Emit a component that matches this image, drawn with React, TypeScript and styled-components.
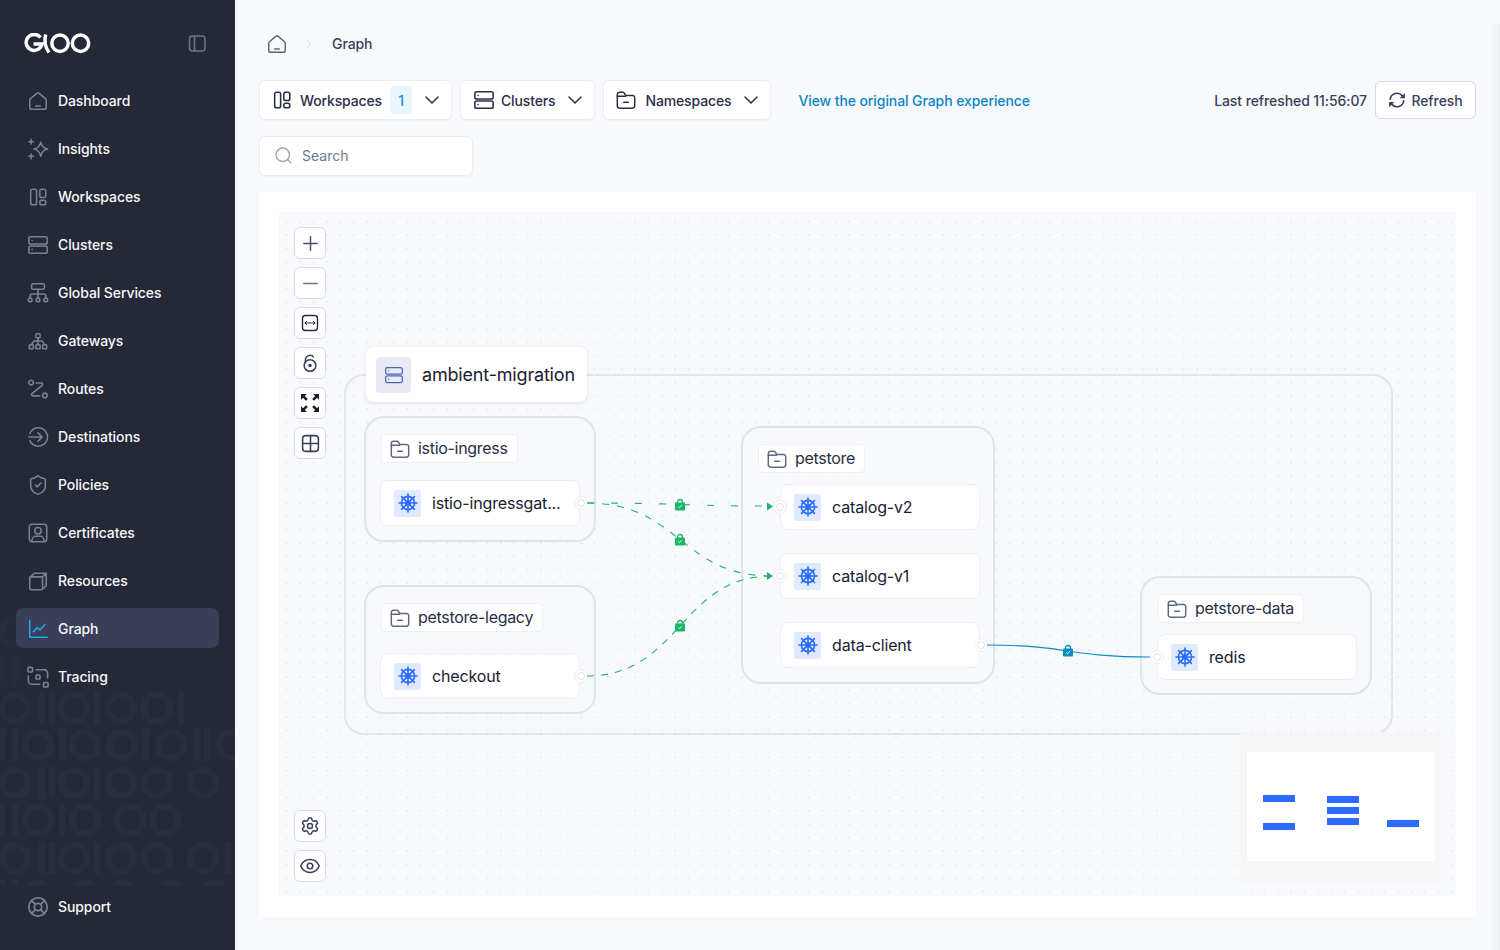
import React from "react";
import styled, { createGlobalStyle } from "styled-components";
import { ChevronDown, ChevronRight, Plus, Minus, Settings, Eye, LifeBuoy, ShieldCheck } from "lucide-react";

const Global = createGlobalStyle`
  * { box-sizing: border-box; }
  html, body { margin: 0; padding: 0; height: 950px; overflow: hidden; background: #f8f9fc; }
  body { font-family: Inter, "Noto Sans", "Liberation Sans", sans-serif; }
`;

const Page = styled.div`
  display: flex;
  width: 1500px;
  height: 950px;
  position: relative;
  overflow: hidden;
`;

const Sidebar = styled.aside`
  position: relative;
  flex: 0 0 235px;
  display: flex;
  flex-direction: column;
  padding: 0 16px 24px;
  background: #252836;
`;

const SidebarPattern = styled.svg`
  position: absolute;
  left: 0;
  top: 610px;
  width: 235px;
  height: 275px;
`;

const LogoRow = styled.div`
  position: relative;
  height: 80px;
  flex: none;
  display: flex;
  align-items: center;
  justify-content: space-between;
  padding: 6px 13px 0 8px;
  color: #6c7488;
`;

const Nav = styled.nav`
  position: relative;
  flex: 1;
  display: flex;
  flex-direction: column;
  gap: 8px;
`;

const NavItem = styled.div<{ $active?: boolean }>`
  position: relative;
  height: 40px;
  flex: none;
  display: flex;
  align-items: center;
  gap: 9px;
  padding: 1px 0 0 11px;
  border-radius: 7px;
  background: ${(p) => (p.$active ? "#3a3e59" : "transparent")};
  color: #f6f7f9;
  font-size: 14px;
  font-weight: 500;
  letter-spacing: -0.09px;
  line-height: 20px;
  svg { color: ${(p) => (p.$active ? "#1fa8e6" : "#7a8194")}; flex: none; }
`;

const Main = styled.main`
  flex: 1;
  min-width: 0;
  display: flex;
  flex-direction: column;
  padding: 24px 24px 0;
  background: #f8f9fc;
`;

const Breadcrumb = styled.div`
  height: 40px;
  margin-bottom: 16px;
  display: flex;
  align-items: center;
  padding-left: 7px;
  color: #5d657c;
  font-size: 14px;
  font-weight: 500;
  letter-spacing: -0.09px;
`;

const Crumb = styled.span`
  margin: 0 0 2px 16px;
  color: #3a3f58;
`;

const CrumbSep = styled.span`
  display: flex;
  margin-left: 14px;
  color: #cfd3dc;
`;

const Toolbar = styled.div`
  height: 40px;
  display: flex;
  align-items: center;
  gap: 8px;
`;

const Dropdown = styled.div<{ $left: number }>`
  height: 40px;
  display: flex;
  align-items: center;
  padding: 0 7px 0 ${(p) => p.$left}px;
  background: #fff;
  border: 1px solid #eceef3;
  border-radius: 6px;
  box-shadow: 0 1px 2px rgba(30, 35, 60, 0.04);
  color: #2a2e45;
  font-size: 14px;
  font-weight: 500;
  letter-spacing: -0.14px;
`;

const DropLabel = styled.span<{ $gap: number }>`
  margin-left: ${(p) => p.$gap}px;
  white-space: nowrap;
`;

const Badge = styled.span`
  width: 22px;
  height: 28px;
  margin-left: 8px;
  display: flex;
  align-items: center;
  justify-content: center;
  border-radius: 4px;
  background: #e8f5fc;
  color: #1a94d0;
`;

const DropChevron = styled.span`
  display: flex;
  margin-left: 8px;
  color: #2a2e45;
`;

const GraphLink = styled.a`
  margin-left: 19px;
  color: #0a86c4;
  font-size: 14px;
  font-weight: 500;
  letter-spacing: -0.09px;
  white-space: nowrap;
`;

const RefreshedText = styled.span`
  margin-left: auto;
  color: #3a3f58;
  font-size: 14px;
  font-weight: 500;
  letter-spacing: -0.09px;
  white-space: nowrap;
`;

const RefreshButton = styled.button`
  width: 101px;
  height: 38px;
  display: flex;
  align-items: center;
  justify-content: center;
  gap: 5px;
  padding: 0;
  background: #fff;
  border: 1px solid #d6d9e4;
  border-radius: 6px;
  color: #3a3f58;
  font: 500 14px Inter, sans-serif;
  letter-spacing: -0.09px;
`;

const SearchBox = styled.div`
  width: 214px;
  height: 40px;
  margin-top: 16px;
  display: flex;
  align-items: center;
  gap: 9px;
  padding: 0 0 1px 14px;
  background: #fff;
  border: 1px solid #eceef3;
  border-radius: 6px;
  box-shadow: 0 1px 2px rgba(30, 35, 60, 0.04);
  color: #6f7890;
  font-size: 14px;
  svg { color: #9aa5b8; }
`;

const Card = styled.section`
  height: 725px;
  margin-top: 16px;
  padding: 20px;
  background: #fff;
`;

const Canvas = styled.div`
  position: relative;
  height: 684px;
  background-color: #f8f9fc;
  background-image: radial-gradient(circle at center, #e9ebf1 1px, transparent 1.1px);
  background-size: 13.4px 13.4px;
  background-position: 1px 3px;
  overflow: hidden;
`;

const Controls = styled.div<{ $top: number }>`
  position: absolute;
  left: 15px;
  top: ${(p) => p.$top}px;
  display: flex;
  flex-direction: column;
  gap: 8px;
`;

const ControlButton = styled.button<{ $tone?: string }>`
  width: 32px;
  height: 32px;
  padding: 0;
  display: flex;
  align-items: center;
  justify-content: center;
  background: #fff;
  border: 1px solid #d8dbe5;
  border-radius: 6px;
  color: ${(p) => p.$tone || "#3a3f58"};
`;

const ClusterFrame = styled.div`
  position: absolute;
  left: 65px;
  top: 162px;
  width: 1049px;
  height: 361px;
  border: 2px solid #e4e6ed;
  border-radius: 20px;
`;

const ClusterLabel = styled.div`
  position: absolute;
  left: 87px;
  top: 135px;
  width: 221px;
  height: 55px;
  display: flex;
  align-items: center;
  gap: 11px;
  padding-left: 10px;
  background: #fff;
  border-radius: 8px;
  box-shadow: 0 1px 4px rgba(40, 45, 80, 0.12);
  color: #1c2033;
  font-size: 18px;
  letter-spacing: -0.18px;
  white-space: nowrap;
`;

const ClusterIconBox = styled.span`
  width: 35px;
  height: 36px;
  display: flex;
  align-items: center;
  justify-content: center;
  border-radius: 4px;
  background: #e8ebf6;
  color: #4f63b5;
`;

const Namespace = styled.div<{ $x: number; $y: number; $w: number; $h: number }>`
  position: absolute;
  left: ${(p) => p.$x - 1}px;
  top: ${(p) => p.$y - 1}px;
  width: ${(p) => p.$w + 1}px;
  height: ${(p) => p.$h + 1}px;
  display: flex;
  flex-direction: column;
  align-items: flex-start;
  padding: 16px 0 0 14px;
  background: rgba(248, 249, 252, 0.7);
  border: 2px solid #e2e4ec;
  border-radius: 20px;
`;

const NsLabel = styled.div<{ $indent: number }>`
  height: 29px;
  flex: none;
  margin-left: ${(p) => p.$indent}px;
  display: flex;
  align-items: center;
  gap: 7px;
  padding: 0 9px 1px 7px;
  background: #fff;
  border: 1px solid #eef0f4;
  border-radius: 4px;
  color: #2a2e45;
  font-size: 16px;
  letter-spacing: -0.3px;
  white-space: nowrap;
  svg { color: #5f6880; margin-top: 1px; }
`;

const ServiceNode = styled.div<{ $indent: number; $top: number }>`
  position: relative;
  width: 200px;
  height: 46px;
  flex: none;
  margin: ${(p) => p.$top}px 0 0 ${(p) => p.$indent}px;
  display: flex;
  align-items: center;
  gap: 11px;
  padding-left: 13px;
  background: #fff;
  border: 1px solid #eceef3;
  border-radius: 8px;
  color: #1c2033;
  font-size: 16px;
  letter-spacing: -0.15px;
  white-space: nowrap;
`;

const HelmBox = styled.span`
  width: 27px;
  height: 27px;
  flex: none;
  display: flex;
  align-items: center;
  justify-content: center;
  border-radius: 2px;
  background: #dfeafd;
  color: #2b6cff;
`;

const Handle = styled.span<{ $side: "left" | "right" }>`
  position: absolute;
  top: 50%;
  ${(p) => p.$side}: ${(p) => (p.$side === "right" ? -9 : -8)}px;
  width: 14px;
  height: 14px;
  margin-top: -7px;
  display: flex;
  align-items: center;
  justify-content: center;
  background: #fff;
  border: 1px solid #eceef2;
  border-radius: 50%;
  &::after {
    content: "";
    width: 6px;
    height: 6px;
    border: 1px solid #e2e4ea;
    border-radius: 50%;
  }
`;

const EdgeLayer = styled.svg`
  position: absolute;
  left: 0;
  top: 0;
  width: 1177px;
  height: 684px;
  pointer-events: none;
`;

const MiniMap = styled.div`
  position: absolute;
  left: 962px;
  top: 520px;
  width: 200px;
  height: 150px;
  padding: 20px 6px 20px;
  background: #f6f6f7;
`;

const MiniMapView = styled.div`
  position: relative;
  width: 188px;
  height: 109px;
  background: #fff;
`;

const MiniBar = styled.span<{ $x: number; $y: number }>`
  position: absolute;
  left: ${(p) => p.$x}px;
  top: ${(p) => p.$y}px;
  width: 32px;
  height: 7px;
  background: #2b6cff;
`;

const EdgeShade = styled.div`
  position: absolute;
  right: 0;
  top: 24px;
  bottom: 0;
  width: 10px;
  background: linear-gradient(to right, rgba(235, 236, 240, 0), #eeeff2);
  pointer-events: none;
`;

const Ic = ({ size = 22, sw = 1.7, children }: { size?: number; sw?: number; children: React.ReactNode }) => (
  <svg width={size} height={size} viewBox="0 0 24 24" fill="none" stroke="currentColor" strokeWidth={sw} strokeLinecap="round" strokeLinejoin="round">
    {children}
  </svg>
);

const HomeIcon = ({ size = 22, sw = 1.7 }: { size?: number; sw?: number }) => (
  <Ic size={size} sw={sw}>
    <path d="M3 11.2c0-.7.3-1.3.8-1.7l6.9-5.8a2 2 0 0 1 2.6 0l6.900 5.800c.5.4.8 1 .8 1.700V19a2 2 0 0 1-2 2H5a2 2 0 0 1-2-2z" />
    <path d="M9.500 17.500h5" />
  </Ic>
);
const InsightsIcon = () => (
  <Ic>
    <path d="M15 4.500c.8 4.300 2.600 6.500 7.500 7.500-4.900 1-6.700 3.200-7.500 8-.8-4.800-2.600-7-7.500-8 4.900-1 6.700-3.200 7.500-7.500z" />
    <path d="M4.500 1.500v5M2 4h5M4.500 17.500v5M2 20h5" />
  </Ic>
);
const WorkspacesIcon = ({ size = 22 }: { size?: number }) => (
  <Ic size={size}>
    <rect x="4" y="3.500" width="6.500" height="17" rx="2" />
    <rect x="14" y="3.500" width="6.500" height="9" rx="2" />
    <rect x="14" y="15.500" width="6.500" height="5" rx="2" />
  </Ic>
);
const ServerIcon = ({ size = 22, sw = 1.7 }: { size?: number; sw?: number }) => (
  <Ic size={size} sw={sw}>
    <rect x="2" y="3" width="20" height="8" rx="2" />
    <rect x="2" y="13" width="20" height="8" rx="2" />
    <path d="M5.500 7h.1M5.500 17h.1" />
  </Ic>
);
const GlobalIcon = () => (
  <Ic>
    <rect x="5" y="2" width="14" height="6" rx="1.500" />
    <path d="M12 8v9M3.500 17v-2a2 2 0 0 1 2-2h13a2 2 0 0 1 2 2v2" />
    <circle cx="3.500" cy="19.500" r="2" />
    <circle cx="12" cy="19.500" r="2" />
    <circle cx="20.500" cy="19.500" r="2" />
  </Ic>
);
const GatewayIcon = () => (
  <Ic>
    <rect x="9.700" y="4" width="4.600" height="4.500" rx=".8" />
    <rect x="2.500" y="16" width="4.500" height="4.500" rx=".8" />
    <rect x="9.700" y="16" width="4.600" height="4.500" rx=".8" />
    <rect x="17" y="16" width="4.500" height="4.500" rx=".8" />
    <path d="M12 8.500V16M4.800 16l2.700-4h9l2.700 4" />
  </Ic>
);
const RoutesIcon = () => (
  <Ic>
    <circle cx="4.500" cy="5" r="2.500" />
    <circle cx="19.500" cy="19" r="2.500" />
    <path d="M10 5.500h5.500c1.500 0 2 1.500 1 2.500L5.500 17c-1 1-.5 2.500 1 2.500H14" />
  </Ic>
);
const DestIcon = () => (
  <Ic>
    <path d="M3.200 8a10 10 0 1 1 0 8M2 12h14.500M12 7.500l4.500 4.500-4.500 4.500" />
  </Ic>
);
const CertIcon = () => (
  <Ic>
    <rect x="2.500" y="2.500" width="19" height="19" rx="3" />
    <circle cx="12" cy="9.500" r="3.500" />
    <path d="M5.500 21.500V20c0-2.500 2-4.500 4-4.500h5c2 0 4 2 4 4.500v1.500" />
  </Ic>
);
const CubeIcon = () => (
  <Ic>
    <rect x="3" y="7.500" width="14" height="14" rx="1.500" />
    <path d="M3.500 8 8 3.500h11.500A1.500 1.500 0 0 1 21 5v12l-4 4M17 7.500l4-4" />
  </Ic>
);
const GraphIcon = () => (
  <Ic>
    <path d="M3 2.500V21h19M7 15l4-4.500 3 2.500 5.500-6" />
  </Ic>
);
const TraceIcon = () => (
  <Ic>
    <rect x="1" y="1.500" width="5" height="5" rx="1" />
    <rect x="9.800" y="9.800" width="4.400" height="4.400" rx=".8" />
    <rect x="18" y="18" width="5" height="5" rx="1" />
    <path d="M10 4h8a4 4 0 0 1 4.500 4v5M14 20H5.500A4 4 0 0 1 1.500 16v-5" />
  </Ic>
);
const FolderIcon = ({ size = 22 }: { size?: number }) => (
  <Ic size={size} sw={1.6}>
    <path d="M2.500 18.500V6A2.500 2.500 0 0 1 5 3.500h3.500a2 2 0 0 1 1.700.9L11.500 7H19a2.500 2.500 0 0 1 2.500 2.500v9A2.500 2.500 0 0 1 19 21H5a2.500 2.500 0 0 1-2.500-2.500z" />
    <path d="M2.500 8h9M9.500 14.500h5" />
  </Ic>
);
const HelmIcon = () => (
  <svg width="20" height="20" viewBox="0 0 20 20" fill="none" stroke="currentColor" strokeWidth="1.600" strokeLinecap="round">
    <circle cx="10" cy="10" r="6.600" />
    <circle cx="10" cy="10" r="2.800" fill="currentColor" stroke="none" />
    <path d="M10 1v18M1 10h18M3.600 3.600l12.800 12.800M16.400 3.600 3.600 16.400" />
  </svg>
);
const RefreshGlyph = () => (
  <svg width="18" height="18" viewBox="0 0 24 24" fill="none" stroke="currentColor" strokeWidth="2.200" strokeLinecap="round">
    <path d="M3 11a9 9 0 0 1 16-4.500M21 13a9 9 0 0 1-16 4.500" />
    <path d="M22.500 2.500v7h-7zM1.500 21.500v-7h7z" fill="currentColor" stroke="none" />
  </svg>
);
const FitIcon = () => (
  <Ic size={20} sw={1.700}>
    <rect x="3" y="3" width="18" height="18" rx="3.500" />
    <path d="M6 12h12M8 10l-2 2 2 2M16 10l2 2-2 2" strokeWidth="1.200" />
  </Ic>
);
const LockOpenIcon = () => (
  <Ic size={20} sw={1.800}>
    <circle cx="12" cy="15" r="7" />
    <circle cx="12" cy="15" r="1.200" fill="currentColor" />
    <path d="M6.500 11V8a5.500 5.500 0 0 1 9.500-3.500" />
  </Ic>
);
const ExpandIcon = () => (
  <svg width="20" height="20" viewBox="0 0 20 20" fill="#1a1c28">
    {[0, 90, 180, 270].map((r) => (
      <path key={r} transform={`rotate(${r} 10 10)`} d="M1 1h5.800L4.800 3l3 3-1.800 1.800-3-3-2 2z" />
    ))}
  </svg>
);
const GridIcon = () => (
  <Ic size={21} sw={1.800}>
    <rect x="3" y="3" width="18" height="18" rx="3.500" />
    <path d="M12 3v18M3 12h18" />
  </Ic>
);
const SidebarToggle = () => (
  <svg width="18" height="18" viewBox="0 0 18 18" fill="none" stroke="currentColor" strokeWidth="1.600">
    <rect x="1.500" y="2" width="15.500" height="15" rx="3" />
    <path d="M6.500 2v15" />
  </svg>
);
const GlooLogo = () => (
  <svg width="67" height="21" viewBox="0 0 67 21" fill="none" stroke="#fff" strokeWidth="3.500" strokeLinecap="butt">
    <path d="M16.500 4.500A8 8 0 1 0 18 11H9.500" />
    <path d="M21.700 1.500C20 8 21 14 25 19.500" />
    <circle cx="36" cy="10.200" r="8.200" />
    <circle cx="56.500" cy="10.200" r="8.200" />
  </svg>
);

const LockBadge = ({ x, y, color }: { x: number; y: number; color: string }) => (
  <g transform={`translate(${x - 5} ${y - 6})`}>
    <path d="M2.500 4V3a2.500 2.500 0 0 1 5 0v1" fill="none" stroke={color} strokeWidth="1.300" />
    <rect x="0" y="3.500" width="10" height="8" rx=".8" fill={color} />
    <path d="M3.200 7.400 4.500 8.700 6.900 6.200" fill="none" stroke="#fff" strokeWidth=".9" />
  </g>
);

const patternRows: { y: number; o: number; items: (string | number)[] }[] = [
  { y: 22, o: 0.7, items: ["o", 15] },
  { y: 60, o: 0.55, items: ["i", 2, "i", 15] },
  { y: 98, o: 1, items: ["o", 15, "i", 42, "i", 52, "o", 74, "i", 97, "o", 121, "o", 157, "i", 181] },
  { y: 135, o: 1, items: ["i", 2, "i", 15, "o", 38, "i", 62, "o", 85, "o", 122, "i", 146, "o", 171, "i", 197, "i", 207, "o", 232] },
  { y: 173, o: 1, items: ["o", 15, "i", 42, "i", 52, "o", 74, "i", 97, "o", 121, "o", 157, "o", 203] },
  { y: 210, o: 1, items: ["i", 2, "i", 15, "o", 38, "i", 62, "o", 85, "o", 130, "o", 165] },
  { y: 248, o: 1, items: ["o", 15, "i", 42, "i", 52, "o", 74, "i", 97, "o", 121, "o", 157, "o", 203, "i", 228] },
  { y: 286, o: 1, items: ["i", 2, "i", 15, "o", 38, "o", 85, "o", 122, "o", 171, "o", 215] },
];

const PatternRow = ({ y, o, items }: { y: number; o: number; items: (string | number)[] }) => {
  const parts: React.ReactNode[] = [];
  for (let i = 0; i < items.length; i += 2) {
    const x = items[i + 1] as number;
    parts.push(
      items[i] === "o" ? (
        <circle key={i} cx={x} cy={y} r="13" fill="none" stroke="#2a2d3c" strokeWidth="6.500" />
      ) : (
        <rect key={i} x={x - 3} y={y - 16} width="6.500" height="32" fill="#2a2d3c" />
      )
    );
  }
  return <g opacity={o}>{parts}</g>;
};

const items: { label: string; icon: React.ReactNode; active?: boolean }[] = [
  { label: "Dashboard", icon: <HomeIcon /> },
  { label: "Insights", icon: <InsightsIcon /> },
  { label: "Workspaces", icon: <WorkspacesIcon /> },
  { label: "Clusters", icon: <ServerIcon /> },
  { label: "Global Services", icon: <GlobalIcon /> },
  { label: "Gateways", icon: <GatewayIcon /> },
  { label: "Routes", icon: <RoutesIcon /> },
  { label: "Destinations", icon: <DestIcon /> },
  { label: "Policies", icon: <ShieldCheck size={22} strokeWidth={1.7} /> },
  { label: "Certificates", icon: <CertIcon /> },
  { label: "Resources", icon: <CubeIcon /> },
  { label: "Graph", icon: <GraphIcon />, active: true },
  { label: "Tracing", icon: <TraceIcon /> },
];

const Service = ({ name, indent = 0, top, left, right }: { name: string; indent?: number; top: number; left?: boolean; right?: boolean }) => (
  <ServiceNode $indent={indent} $top={top}>
    <HelmBox><HelmIcon /></HelmBox>
    {name}
    {left && <Handle $side="left" />}
    {right && <Handle $side="right" />}
  </ServiceNode>
);

const Ns = ({ name, indent = 1 }: { name: string; indent?: number }) => (
  <NsLabel $indent={indent}><FolderIcon />{name}</NsLabel>
);

const GREEN = "#1db46c";

export default function App() {
  return (
    <Page>
      <Global />
      <Sidebar>
        <SidebarPattern viewBox="0 0 235 275">
          {patternRows.map((r) => <PatternRow key={r.y} {...r} />)}
        </SidebarPattern>
        <LogoRow>
          <GlooLogo />
          <SidebarToggle />
        </LogoRow>
        <Nav>
          {items.map((it) => (
            <NavItem key={it.label} $active={it.active}>{it.icon}{it.label}</NavItem>
          ))}
        </Nav>
        <NavItem><LifeBuoy size={22} strokeWidth={1.900} />Support</NavItem>
      </Sidebar>
      <Main>
        <Breadcrumb>
          <HomeIcon size={22} sw={1.600} />
          <CrumbSep><ChevronRight size={14} strokeWidth={1.500} /></CrumbSep>
          <Crumb>Graph</Crumb>
        </Breadcrumb>
        <Toolbar>
          <Dropdown $left={11}>
            <WorkspacesIcon />
            <DropLabel $gap={7}>Workspaces</DropLabel>
            <Badge>1</Badge>
            <DropChevron><ChevronDown size={24} strokeWidth={1.500} /></DropChevron>
          </Dropdown>
          <Dropdown $left={12}>
            <ServerIcon />
            <DropLabel $gap={6}>Clusters</DropLabel>
            <DropChevron><ChevronDown size={24} strokeWidth={1.500} /></DropChevron>
          </Dropdown>
          <Dropdown $left={11}>
            <FolderIcon />
            <DropLabel $gap={8}>Namespaces</DropLabel>
            <DropChevron><ChevronDown size={24} strokeWidth={1.500} /></DropChevron>
          </Dropdown>
          <GraphLink>View the original Graph experience</GraphLink>
          <RefreshedText>Last refreshed 11:56:07</RefreshedText>
          <RefreshButton><RefreshGlyph />Refresh</RefreshButton>
        </Toolbar>
        <SearchBox>
          <Ic size={19} sw={1.700}><circle cx="11" cy="11" r="8.500" /><path d="m18 18 3.500 3.500" /></Ic>
          Search
        </SearchBox>
        <Card>
          <Canvas>
            <ClusterFrame />
            <ClusterLabel>
              <ClusterIconBox><ServerIcon size={20} sw={1.500} /></ClusterIconBox>
              ambient-migration
            </ClusterLabel>
            <Namespace $x={86} $y={205} $w={231} $h={125}>
              <Ns name="istio-ingress" />
              <Service name="istio-ingressgat..." top={17} right />
            </Namespace>
            <Namespace $x={86} $y={374} $w={231} $h={128}>
              <Ns name="petstore-legacy" />
              <Service name="checkout" top={21} right />
            </Namespace>
            <Namespace $x={463} $y={215} $w={253} $h={257}>
              <Ns name="petstore" />
              <Service name="catalog-v2" indent={23} top={11} left />
              <Service name="catalog-v1" indent={23} top={23} left />
              <Service name="data-client" indent={23} top={23} right />
            </Namespace>
            <Namespace $x={862} $y={365} $w={231} $h={118}>
              <Ns name="petstore-data" indent={2} />
              <Service name="redis" indent={1} top={11} left />
            </Namespace>
            <EdgeLayer viewBox="279 212 1177 684">
              <g fill="none" stroke={GREEN} strokeWidth="1.100">
                <path d="M587 503C680 503 680 506 772 506" strokeDasharray="7 17" />
                <path d="M587 503C680 503 680 576 772 576" strokeDasharray="7 8" />
                <path d="M587 676C680 676 680 576 772 576" strokeDasharray="7 7" />
              </g>
              <path d="M987 645C1068 645 1068 657 1150 657" fill="none" stroke="#0a8cc4" strokeWidth="1.100" />
              <path d="M767 502.500 773 506.500 767 510.500z" fill={GREEN} />
              <path d="M767 572 773 576 767 580z" fill={GREEN} />
              <LockBadge x={680} y={505} color={GREEN} />
              <LockBadge x={680} y={540} color={GREEN} />
              <LockBadge x={680} y={626} color={GREEN} />
              <LockBadge x={1068} y={651} color="#0a8cc4" />
            </EdgeLayer>
            <MiniMap>
              <MiniMapView>
                <MiniBar $x={16} $y={43} />
                <MiniBar $x={16} $y={71} />
                <MiniBar $x={80} $y={44} />
                <MiniBar $x={80} $y={55} />
                <MiniBar $x={80} $y={66} />
                <MiniBar $x={140} $y={68} />
              </MiniMapView>
            </MiniMap>
            <Controls $top={15}>
              <ControlButton $tone="#4a5068"><Plus size={23} strokeWidth={1.500} /></ControlButton>
              <ControlButton $tone="#6a7186"><Minus size={23} strokeWidth={1.500} /></ControlButton>
              <ControlButton $tone="#2a2d40"><FitIcon /></ControlButton>
              <ControlButton><LockOpenIcon /></ControlButton>
              <ControlButton><ExpandIcon /></ControlButton>
              <ControlButton><GridIcon /></ControlButton>
            </Controls>
            <Controls $top={598}>
              <ControlButton><Settings size={20} strokeWidth={1.800} /></ControlButton>
              <ControlButton><Eye size={22} strokeWidth={1.700} /></ControlButton>
            </Controls>
          </Canvas>
        </Card>
      </Main>
      <EdgeShade />
    </Page>
  );
}
